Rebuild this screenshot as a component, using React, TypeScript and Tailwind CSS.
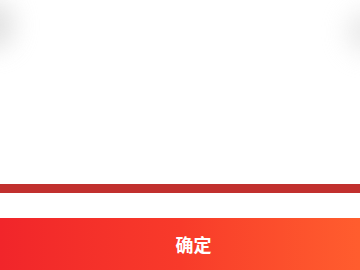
import React from "react";

export default function App() {
  return (
    <div className="relative w-[360px] h-[270px] overflow-hidden bg-white flex flex-col" style={{ fontFamily: '"Noto Sans CJK SC", "Noto Sans", sans-serif' }}>
      <div className="pointer-events-none absolute -left-[30px] top-[0px] w-[44px] h-[50px] rounded-full bg-[#d6d6d6] blur-[12px] opacity-70" />
      <div className="pointer-events-none absolute -right-[30px] top-[10px] w-[44px] h-[44px] rounded-full bg-[#dedede] blur-[12px] opacity-60" />
      <div className="h-[184px] bg-white" />
      <div className="h-[9px] bg-[#c1302e]" />
      <div className="h-[25px] bg-white" />
      <button className="h-[52px] w-full flex items-center justify-center pl-[27px] bg-gradient-to-r from-[#f1252a] via-[#f83a2a] to-[#ff5d2e] text-white text-[18px] font-bold">
        确定
      </button>
    </div>
  );
}
